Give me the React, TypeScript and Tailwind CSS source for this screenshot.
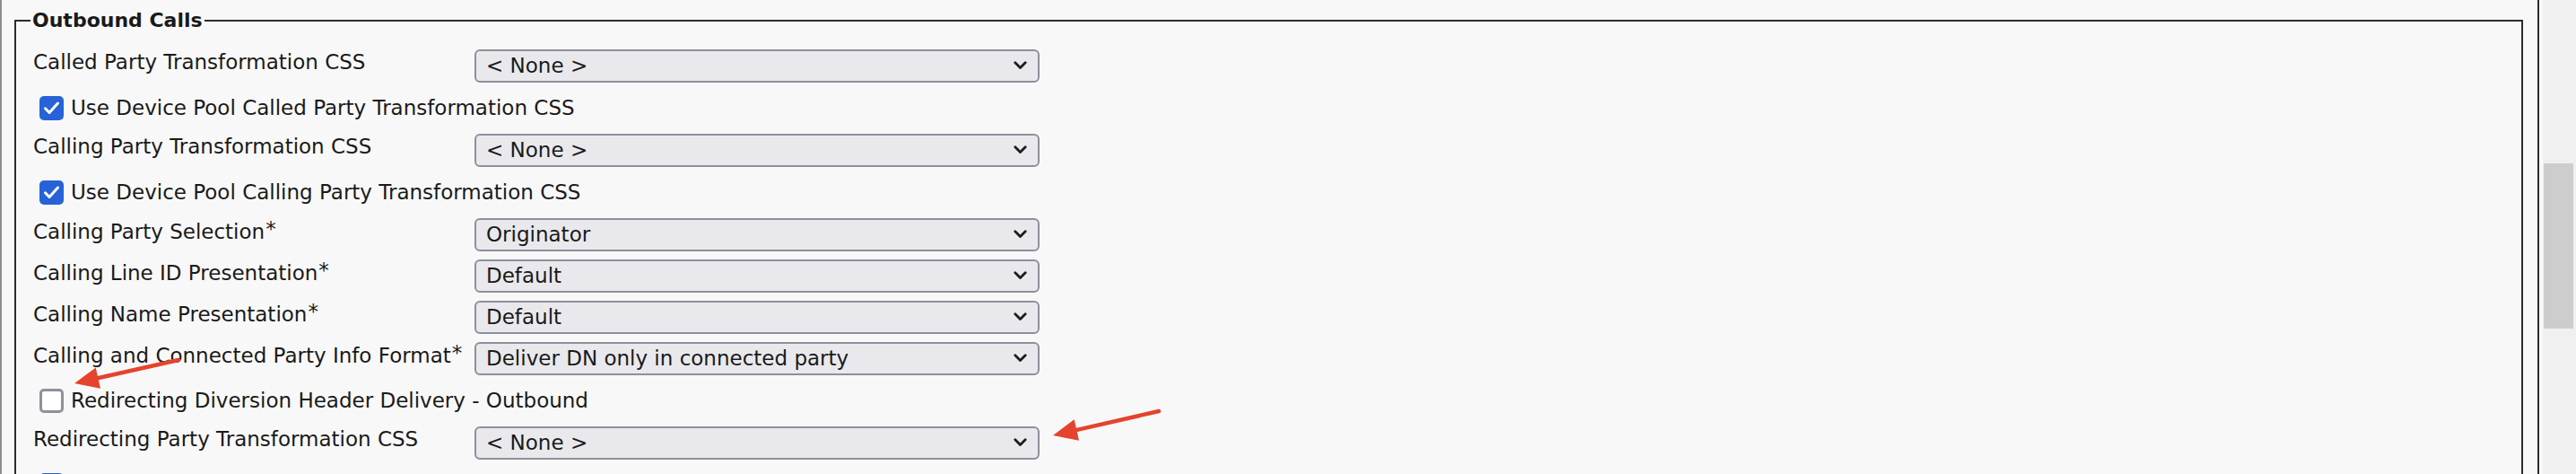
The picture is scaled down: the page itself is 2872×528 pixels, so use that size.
import React from 'react';

type Row =
  | { kind: 'select'; label: string; value: string; required?: boolean }
  | { kind: 'check'; label: string; checked: boolean };

const rows: Row[] = [
  { kind: 'select', label: 'Called Party Transformation CSS', value: '< None >' },
  { kind: 'check', label: 'Use Device Pool Called Party Transformation CSS', checked: true },
  { kind: 'select', label: 'Calling Party Transformation CSS', value: '< None >' },
  { kind: 'check', label: 'Use Device Pool Calling Party Transformation CSS', checked: true },
  { kind: 'select', label: 'Calling Party Selection', value: 'Originator', required: true },
  { kind: 'select', label: 'Calling Line ID Presentation', value: 'Default', required: true },
  { kind: 'select', label: 'Calling Name Presentation', value: 'Default', required: true },
  { kind: 'select', label: 'Calling and Connected Party Info Format', value: 'Deliver DN only in connected party', required: true },
  { kind: 'check', label: 'Redirecting Diversion Header Delivery - Outbound', checked: false },
  { kind: 'select', label: 'Redirecting Party Transformation CSS', value: '< None >' },
  // only the top of this checkbox is in view, its label is below the fold
  { kind: 'check', label: '', checked: true },
];

// annotation arrows, page coordinates (tail -> tip)
const arrows = [
  { x1: 199, y1: 401, x2: 83, y2: 427 },
  { x1: 1292, y1: 458, x2: 1174, y2: 485 },
];

function Chevron() {
  return (
    <svg width="15" height="10" viewBox="0 0 15 10" fill="none">
      <path d="M1.8 1.8 L7.5 7.6 L13.2 1.8" stroke="#1c1c1c" strokeWidth="2.8" strokeLinecap="round" strokeLinejoin="round" />
    </svg>
  );
}

function Checkbox({ checked }: { checked: boolean }) {
  if (!checked) {
    return <div className="h-[27px] w-[27px] shrink-0 rounded-[5px] border-[3px] border-[#8f8f9d] bg-white" />;
  }
  return (
    <div className="flex h-[27px] w-[27px] shrink-0 items-center justify-center rounded-[5px] bg-[#2862d8]">
      <svg width="19" height="17" viewBox="0 0 19 17" fill="none">
        <path d="M2.5 8.8 L7 13.5 L16.5 3" stroke="white" strokeWidth="3" strokeLinecap="round" strokeLinejoin="round" />
      </svg>
    </div>
  );
}

function Arrow({ x1, y1, x2, y2 }: { x1: number; y1: number; x2: number; y2: number }) {
  const len = Math.hypot(x2 - x1, y2 - y1);
  const ux = (x2 - x1) / len;
  const uy = (y2 - y1) / len;
  const bx = x2 - ux * 27;
  const by = y2 - uy * 27;
  const nx = -uy * 12;
  const ny = ux * 12;
  return (
    <g>
      <line x1={x1} y1={y1} x2={bx + ux * 4} y2={by + uy * 4} stroke="#e5432c" strokeWidth="4.5" strokeLinecap="round" />
      <polygon points={`${x2},${y2} ${bx + nx},${by + ny} ${bx - nx},${by - ny}`} fill="#e5432c" />
    </g>
  );
}

export default function App() {
  return (
    <div className="relative flex h-[528px] w-full overflow-hidden bg-[#f8f8f8] font-['DejaVu_Sans',sans-serif] text-[23px] text-[#1a1a1a]">
      {/* page frame */}
      <div className="h-full w-[2835px] shrink-0">
        <div className="h-full w-[2831px] border-l-2 border-r-2 border-l-[#8c8c8c] border-r-[#2c2c2c] pl-[14px] pr-[16px] pt-[10px]">
          <fieldset className="h-[700px] border-2 border-[#2c2c2c] pl-[19px] pt-[14px]">
            <legend className="-ml-[3px] px-[2px] text-[22px] font-bold leading-[26px]">Outbound Calls</legend>

            {rows.map((row, i) =>
              row.kind === 'select' ? (
                <div key={i} className="flex h-[46px] items-center">
                  <div className="w-[492px] shrink-0 whitespace-nowrap pb-2">
                    {row.label}
                    {row.required && <span className="ml-[1px] align-[3px]">*</span>}
                  </div>
                  <div className="flex h-[37px] w-[630px] shrink-0 items-center justify-between rounded-[6px] border-2 border-[#8f8f9d] bg-[#e9e9ed] pl-[11px] pr-[12px]">
                    <span className="whitespace-nowrap">{row.value}</span>
                    <Chevron />
                  </div>
                </div>
              ) : (
                <div key={i} className="flex h-[48px] items-center gap-[8px] pl-[7px]">
                  <Checkbox checked={row.checked} />
                  {row.label && <span className="whitespace-nowrap">{row.label}</span>}
                </div>
              )
            )}
          </fieldset>
        </div>
      </div>

      {/* scrollbar */}
      <div className="h-full w-[37px] shrink-0 bg-[#f0f0f0] pl-[1px] pt-[182px]">
        <div className="h-[184px] w-[33px] bg-[#cdcdcd]" />
      </div>

      {/* red annotation arrows */}
      <svg className="pointer-events-none absolute left-0 top-0" width="2872" height="528">
        {arrows.map((a, i) => (
          <Arrow key={i} {...a} />
        ))}
      </svg>
    </div>
  );
}
